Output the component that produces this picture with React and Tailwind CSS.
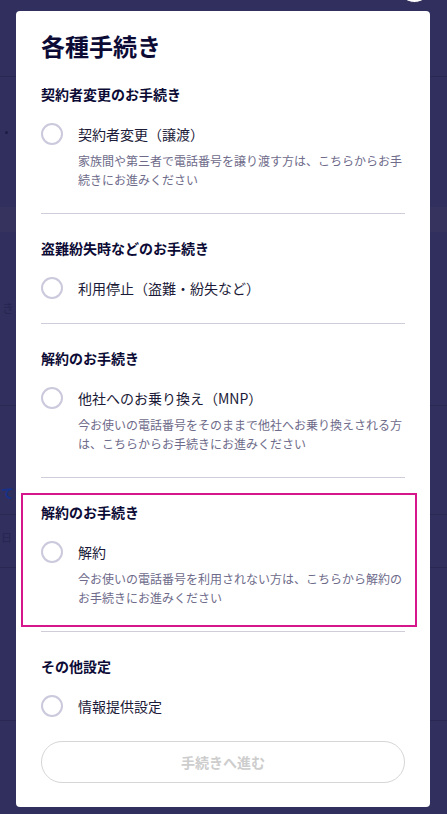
import React from "react";

const sections = [
  {
    heading: "契約者変更のお手続き",
    label: "契約者変更（譲渡）",
    desc: "家族間や第三者で電話番号を譲り渡す方は、こちらからお手続きにお進みください",
  },
  {
    heading: "盗難紛失時などのお手続き",
    label: "利用停止（盗難・紛失など）",
  },
  {
    heading: "解約のお手続き",
    label: "他社へのお乗り換え（MNP）",
    desc: "今お使いの電話番号をそのままで他社へお乗り換えされる方は、こちらからお手続きにお進みください",
  },
];

function Radio() {
  return (
    <span className="block w-[22px] h-[22px] shrink-0 rounded-full border-2 border-[#cbc9dc] bg-white" />
  );
}

function Option({ label, desc }) {
  return (
    <div className="mt-[19px] flex items-start gap-[15px]">
      <Radio />
      <div className="flex-1 min-w-0">
        <div className="text-[14px] leading-[22px] text-[#1b1a38]">{label}</div>
        {desc && (
          <p className="mt-[6px] text-[12px] leading-[19px] text-[#6e6b8a]">{desc}</p>
        )}
      </div>
    </div>
  );
}

function Heading({ children }) {
  return (
    <h3 className="text-[14px] leading-[20px] font-bold text-[#0c0b36]">{children}</h3>
  );
}

export default function App() {
  return (
    <div
      className="relative w-[447px] h-[814px] overflow-hidden bg-[#312f5d]"
      style={{ fontFamily: '"Noto Sans CJK JP", "Noto Sans", sans-serif' }}
    >
      {/* dimmed underlying page */}
      <div className="flex flex-col text-[#262552]">
        <div className="h-[77px] border-b border-[#2a2852]" />
        <div className="h-[130px] flex items-start pt-[54px] pl-[5px]">
          <span className="block w-[3px] h-[3px] rounded-full bg-[#1c1c45]" />
        </div>
        <div className="h-[25px] bg-[#36345f]" />
        <div className="h-[174px] border-b border-[#2a2852] flex items-start pt-[66px] pl-[2px]">
          <span className="text-[12px] leading-[20px]">き</span>
        </div>
        <div className="h-[109px] border-b border-[#2a2852] flex items-end pb-[12px] pl-[1px]">
          <span className="text-[#17318a] font-bold text-[13px] leading-[18px]">て</span>
        </div>
        <div className="h-[53px] border-b border-[#2a2852] flex items-start pt-[14px] pl-[1px]">
          <span className="text-[11px] leading-[16px]">日</span>
        </div>
        <div className="h-[153px] border-b border-[#2a2852]" />
        <div className="flex-1" />
      </div>

      {/* close button peeking at top */}
      <div className="absolute left-[397px] top-[-32px] w-[35px] h-[35px] rounded-full bg-white border border-[#2a2852]" />

      {/* modal */}
      <div className="absolute left-[16px] top-[11px] w-[414px] rounded-[4px] bg-white px-[25px] pt-[19px] pb-[24px]">
        <h2 className="text-[24px] leading-[32px] font-bold text-[#0c0b36]">各種手続き</h2>

        {sections.map((s, i) => (
          <section
            key={i}
            className={`${i === 0 ? "pt-[22px]" : "pt-[24px]"} pb-[24px] border-b border-[#cfcdd9]`}
          >
            <Heading>{s.heading}</Heading>
            <Option label={s.label} desc={s.desc} />
          </section>
        ))}

        <section className="pt-[15px] pb-[4px] border-b border-[#cfcdd9]">
          <div className="ml-[-20px] mr-[-12px] pl-[18px] pr-[10px] pt-[7px] pb-[18px] border-2 border-[#d6168b]">
            <Heading>解約のお手続き</Heading>
            <Option
              label="解約"
              desc="今お使いの電話番号を利用されない方は、こちらから解約のお手続きにお進みください"
            />
          </div>
        </section>

        <section className="pt-[24px]">
          <Heading>その他設定</Heading>
          <Option label="情報提供設定" />
        </section>

        <button
          type="button"
          className="mt-[24px] w-full h-[42px] rounded-full border border-[#d6d6d6] bg-white text-[14px] font-bold text-[#cdcdcd]"
        >
          手続きへ進む
        </button>
      </div>
    </div>
  );
}
